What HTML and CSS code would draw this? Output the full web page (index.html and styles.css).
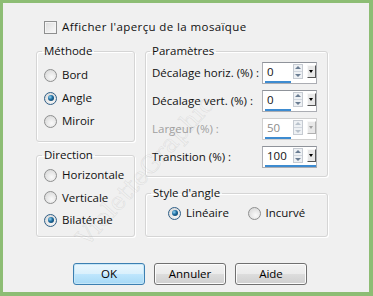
FILE: index.html
```html
<!DOCTYPE html>
<html lang="fr">
<head>
    <meta charset="utf-8">
    <title>Mosaïque</title>
    <link rel="stylesheet" href="styles.css">
</head>
<body>
<div class="dialog">
    <label class="check"><span class="box"></span>Afficher l'aperçu de la mosaïque</label>

    <div class="groups">
        <div class="col">
            <fieldset class="grp methode">
                <legend>Méthode</legend>
                <div class="opts">
                    <div class="opt"><span class="radio"></span>Bord</div>
                    <div class="opt"><span class="radio on"></span>Angle</div>
                    <div class="opt"><span class="radio"></span>Miroir</div>
                </div>
            </fieldset>
            <fieldset class="grp direction">
                <legend>Direction</legend>
                <div class="opts">
                    <div class="opt"><span class="radio"></span>Horizontale</div>
                    <div class="opt"><span class="radio"></span>Verticale</div>
                    <div class="opt"><span class="radio on"></span>Bilatérale</div>
                </div>
            </fieldset>
        </div>

        <div class="col">
            <fieldset class="grp params">
                <legend>Paramètres</legend>
                <div class="fields">
                    <div class="field">
                        <span class="lbl">Décalage horiz. (%) :</span>
                        <div class="spin">
                            <div class="spin-row"><span class="val">0</span><span class="arrows"></span><span class="drop"></span></div>
                            <div class="bar"></div>
                        </div>
                    </div>
                    <div class="field">
                        <span class="lbl">Décalage vert. (%) :</span>
                        <div class="spin">
                            <div class="spin-row"><span class="val">0</span><span class="arrows"></span><span class="drop"></span></div>
                            <div class="bar"></div>
                        </div>
                    </div>
                    <div class="field off">
                        <span class="lbl">Largeur (%) :</span>
                        <div class="spin">
                            <div class="spin-row"><span class="val">50</span><span class="arrows"></span><span class="drop"></span></div>
                            <div class="bar"></div>
                        </div>
                    </div>
                    <div class="field">
                        <span class="lbl">Transition (%) :</span>
                        <div class="spin">
                            <div class="spin-row"><span class="val">100</span><span class="arrows"></span><span class="drop"></span></div>
                            <div class="bar full"></div>
                        </div>
                    </div>
                </div>
            </fieldset>
            <fieldset class="grp style">
                <legend>Style d'angle</legend>
                <div class="inline">
                    <div class="opt"><span class="radio on"></span>Linéaire</div>
                    <div class="opt"><span class="radio"></span>Incurvé</div>
                </div>
            </fieldset>
        </div>
    </div>

    <div class="buttons">
        <button class="default">OK</button>
        <button>Annuler</button>
        <button>Aide</button>
    </div>

    <div class="watermark">VioletteGraphic</div>
</div>
</body>
</html>
```

FILE: styles.css
```css
body { margin: 0; font-family: "Open Sans", "Noto Sans", sans-serif; font-size: 11.5px; line-height: 14px; color: #111; }
.dialog { position: relative; overflow: hidden; box-sizing: border-box; width: 373px; height: 296px; background: #f0f0f0; border: solid #8dbd74; border-width: 3px 4px 4px 3px; padding: 17px 0 0 33px; }

.check { display: flex; align-items: center; height: 14px; padding-left: 8px; letter-spacing: 0.4px; }
.box { width: 11px; height: 11px; margin-right: 5px; border: 1px solid #8e8f8f; background: linear-gradient(135deg, #dcdcdc, #fafafa); box-shadow: inset 0 0 0 1px #f4f4f4; }

.groups { display: grid; grid-template-columns: 99px 183px; column-gap: 10px; margin-top: 10px; }
.col { display: flex; flex-direction: column; }

.grp { margin: 0; padding: 0; min-width: 0; box-sizing: border-box; border: 1px solid #d5d5d5; border-radius: 3px; box-shadow: inset 1px 1px 0 #fff, 1px 1px 0 #fff; }
.grp legend { padding: 0 2px; margin-left: 5px; }
.methode { height: 98px; }
.direction { height: 89px; margin-top: 6px; }
.params { height: 133px; }
.params legend { margin-left: 4px; }
.style { height: 51px; margin-top: 9px; }

.opts { display: flex; flex-direction: column; gap: 7px; padding: 9px 0 0 7px; }
.direction .opts { gap: 6.5px; padding-top: 5px; }
.opt { display: flex; align-items: center; height: 16px; }
.radio { position: relative; width: 11px; height: 11px; margin-right: 5px; border: 1px solid #8e8f8f; border-radius: 50%; background: radial-gradient(circle at 60% 65%, #fafafa 0, #dedede 70%); }
.radio.on { border-color: #2f5f87; }
.radio.on::after { content: ""; position: absolute; left: 2.5px; top: 2.5px; width: 6px; height: 6px; border-radius: 50%; background: radial-gradient(circle at 35% 35%, #8fd3f3 0, #1d6b9e 45%, #0b3452 100%); }

.inline { display: flex; padding: 5px 0 0 22px; }
.inline .opt { width: 82px; }

.fields { display: flex; flex-direction: column; gap: 7px; padding: 4px 0 0 6px; }
.field { display: flex; align-items: center; height: 21px; }
.lbl { width: 110px; }
.field.off .lbl { color: #a0a0a0; }

.spin { box-sizing: border-box; width: 55px; height: 22px; border: 1px solid #abadb3; border-top-color: #8f939a; background: #fff; display: flex; flex-direction: column; }
.spin-row { display: flex; align-items: center; height: 17px; }
.val { width: 27px; padding: 1px 0 0 4px; }
.arrows { width: 8px; height: 13px; border: 1px solid #c6cbd2; background:
    linear-gradient(#d0d6de, #d0d6de) center / 8px 1px no-repeat,
    #eef1f4; position: relative; }
.arrows::before, .arrows::after { content: ""; position: absolute; left: 1px; border-left: 3px solid transparent; border-right: 3px solid transparent; }
.arrows::before { top: 1px; border-bottom: 3px solid #6a7d92; }
.arrows::after { bottom: 1px; border-top: 3px solid #6a7d92; }
.drop { position: relative; width: 7px; height: 11px; margin-left: 4px; border: 1px solid; border-color: #f8f8f8 #555 #555 #f8f8f8; background: #e8e8e8; }
.drop::after { content: ""; position: absolute; left: 1px; top: 4px; border-left: 2.5px solid transparent; border-right: 2.5px solid transparent; border-top: 3px solid #000; }
.bar { width: 26px; height: 2px; margin: 1px 0 0 2px; background: #3d8bd0; }
.bar.full { width: auto; }
.field.off .spin { border-color: #cfcfcf; }
.field.off .val { color: #8c8c8c; }
.field.off .arrows::before { border-bottom-color: #b8c2cc; }
.field.off .arrows::after { border-top-color: #b8c2cc; }
.field.off .drop { border-color: #f8f8f8 #b0b0b0 #b0b0b0 #f8f8f8; }
.field.off .drop::after { border-top-color: #a0a0a0; }

.buttons { display: flex; gap: 9px; margin: 26px 0 0 37px; }
button { box-sizing: border-box; width: 72px; height: 22px; padding: 0; font: inherit; color: #000; border: 1px solid #707070; border-radius: 3px; background: linear-gradient(#f2f2f2 0, #ebebeb 50%, #dddddd 51%, #cfcfcf 100%); box-shadow: inset 0 0 0 1px #fcfcfc; }
button.default { border-color: #3c7fb1; background: linear-gradient(#eaf6fd 0, #d9f0fc 50%, #bee6fd 51%, #a7d9f5 100%); box-shadow: inset 0 0 0 1px #c5e6f7; }

.watermark { position: absolute; left: 78px; top: 232px; transform: rotate(-48deg); transform-origin: left center; font-size: 24px; font-family: "DejaVu Serif", serif; color: transparent; -webkit-text-stroke: 0.5px rgba(140, 140, 140, 0.22); pointer-events: none; white-space: nowrap; }
```
